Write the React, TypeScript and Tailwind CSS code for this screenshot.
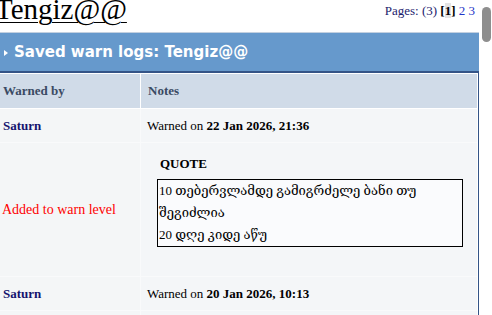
import React from 'react';

type Entry = {
  by: string;
  date: string;
  action: string;
  quote: string[];
};

const entries: Entry[] = [
  {
    by: 'Saturn',
    date: '22 Jan 2026, 21:36',
    action: 'Added to warn level',
    quote: ['10 თებერვლამდე გამიგრძელე ბანი თუ', 'შეგიძლია', '20 დღე კიდე აწუ'],
  },
  {
    by: 'Saturn',
    date: '20 Jan 2026, 10:13',
    action: 'Added to warn level',
    quote: ['ფორუმის წესების დარღვევა', 'შეურაცხყოფა'],
  },
  {
    by: 'Saturn',
    date: '14 Jan 2026, 18:02',
    action: 'Added to warn level',
    quote: ['სპამი თემაში'],
  },
  {
    by: 'Saturn',
    date: '09 Jan 2026, 12:47',
    action: 'Added to warn level',
    quote: ['ოფტოპი', 'გაფრთხილება'],
  },
  {
    by: 'Saturn',
    date: '02 Jan 2026, 23:15',
    action: 'Added to warn level',
    quote: ['ფლუდი'],
  },
];

const serif = 'font-["Liberation_Serif","DejaVu_Serif",serif]';

export default function App() {
  return (
    <div className={`${serif} text-[13px] text-black bg-white min-h-screen`}>
      <div className="w-[479px]">
        <div className="flex justify-between items-start h-[32px] overflow-hidden">
          <h1 className="text-[29px] leading-[32px] -mt-[7px] -ml-[5px] underline underline-offset-[3px] decoration-1">
            Tengiz@@
          </h1>
          <div className="pt-[3px] pr-[4px] text-[13px] leading-[16px] text-[#1c1c6e]">
            Pages: (3) <span className="font-bold text-black">[<span className="bg-[#e4e4e4]">1</span>]</span>{' '}
            <span className="text-[#1f35c8]">2</span> <span className="text-[#1f35c8]">3</span>
          </div>
        </div>

        <div className="h-[39px] bg-[#6699cc] border-t border-[#c3d0e0] flex items-center gap-[6px] pl-[4px]">
          <svg width="4" height="6" viewBox="0 0 4 6" className="mt-[1px]">
            <path d="M0 0 L4 3 L0 6 Z" fill="#fff" />
          </svg>
          <span className='font-["DejaVu_Sans",Verdana,sans-serif] font-bold text-[15px] text-white'>
            Saved warn logs: Tengiz@@
          </span>
        </div>

        <div className="border-t-2 border-r border-[#345487] pt-px pr-px">
          <div className="grid grid-cols-[140px_1fr] gap-px bg-white">
            <div className="h-[34px] flex items-center pl-[3px] bg-[#d0dbe8] font-bold text-[#3a4a63]">Warned by</div>
            <div className="h-[34px] flex items-center pl-[7px] bg-[#d0dbe8] font-bold text-[#3a4a63]">Notes</div>
          </div>

          <div className="grid grid-cols-[140px_1fr] gap-px bg-[#f9fafb] mt-px">
            {entries.map((e, i) => (
              <React.Fragment key={i}>
                <div className="h-[33px] flex items-center pl-[3px] bg-[#f4f6f7] font-bold text-[#14146e]">{e.by}</div>
                <div className="h-[33px] flex items-center pl-[6px] bg-[#f4f6f8]">
                  Warned on&nbsp;<b>{e.date}</b>
                </div>

                <div className="flex items-center pl-[2px] bg-[#f4f6f7] text-[14px] text-[#ff0000]">{e.action}</div>
                <div className="bg-[#f4f6f8] pl-[6px] pr-[14px] pt-[13px] pb-[29px]">
                  <div className="ml-[13px] font-bold leading-[16px]">QUOTE</div>
                  <div className="mt-[7px] ml-[10px] border border-black bg-[#fafbfd] pl-px leading-[22px]">
                    {e.quote.map((line, j) => (
                      <div key={j}>{line}</div>
                    ))}
                  </div>
                </div>
              </React.Fragment>
            ))}
          </div>
        </div>
      </div>

      {/* scrollbar thumb overlay */}
      <div className="fixed top-[7px] right-[1px] w-[9px] h-[35px] rounded-full bg-[#8e8e8e]" />
    </div>
  );
}
